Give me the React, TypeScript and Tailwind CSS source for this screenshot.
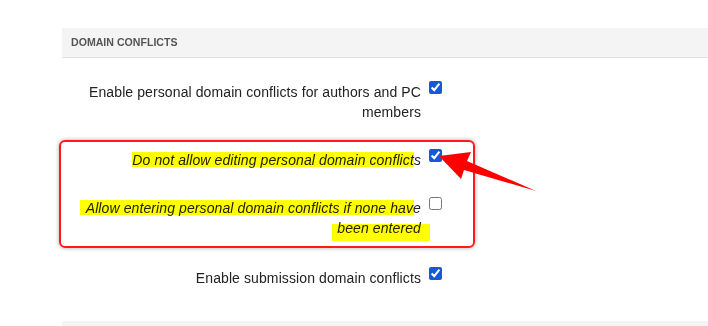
import React from "react";

function Row({
  label,
  checked,
  italic,
  extra,
}: {
  label: string;
  checked: boolean;
  italic?: boolean;
  extra?: string;
}) {
  return (
    <div className={`flex items-start pl-[13px] py-[14px] ${extra ?? ""}`}>
      <div
        className={`w-[346px] text-right text-[14px] leading-[20px] tracking-[0.1px] text-[#222] ${
          italic ? "italic" : ""
        }`}
      >
        {label}
      </div>
      <input
        type="checkbox"
        defaultChecked={checked}
        className="ml-[8px] mt-[-1px] m-0 w-[13px] h-[13px] accent-[#1659d6] shrink-0"
      />
    </div>
  );
}

export default function App() {
  return (
    <div
      className="relative w-[708px] h-[326px] bg-white overflow-hidden"
      style={{ fontFamily: '"Liberation Sans", Arial, sans-serif' }}
    >
      <div className="pl-[62px] pt-[28px]">
        <div className="h-[30px] bg-[#f4f4f4] border-b border-[#e2e2e2] flex items-center pl-[9px]">
          <span className="text-[10.6px] font-bold text-[#555] uppercase">
            Domain Conflicts
          </span>
        </div>
        <div className="pt-[10px]">
          <Row
            label="Enable personal domain conflicts for authors and PC members"
            checked
          />
          <Row
            label="Do not allow editing personal domain conflicts"
            checked
            italic
          />
          <Row
            label="Allow entering personal domain conflicts if none have been entered"
            checked={false}
            italic
          />
          <Row
            label="Enable submission domain conflicts"
            checked
            extra="mt-[2px]"
          />
        </div>
        <div className="mt-[19px] h-[20px] bg-[#f4f4f4]" />
      </div>

      {/* annotation highlights */}
      <div className="absolute left-[132px] top-[152px] w-[282px] h-[15px] bg-[#ffff00] mix-blend-multiply" />
      <div className="absolute left-[80px] top-[200px] w-[334px] h-[15px] bg-[#ffff00] mix-blend-multiply" />
      <div className="absolute left-[332px] top-[224px] w-[98px] h-[17px] bg-[#ffff00] mix-blend-multiply" />

      {/* annotation box */}
      <div className="absolute left-[59px] top-[140px] w-[416px] h-[108px] border-2 border-[#ff1a1a] rounded-[6px] shadow-[0_0_4px_rgba(0,0,0,0.35)]" />

      {/* annotation arrow */}
      <svg
        className="absolute left-0 top-0"
        width="708"
        height="326"
        viewBox="0 0 708 326"
      >
        <polygon
          points="439,156 471,152 467,161 536,191 464,170 461,179"
          fill="#ff0000"
        />
      </svg>
    </div>
  );
}
